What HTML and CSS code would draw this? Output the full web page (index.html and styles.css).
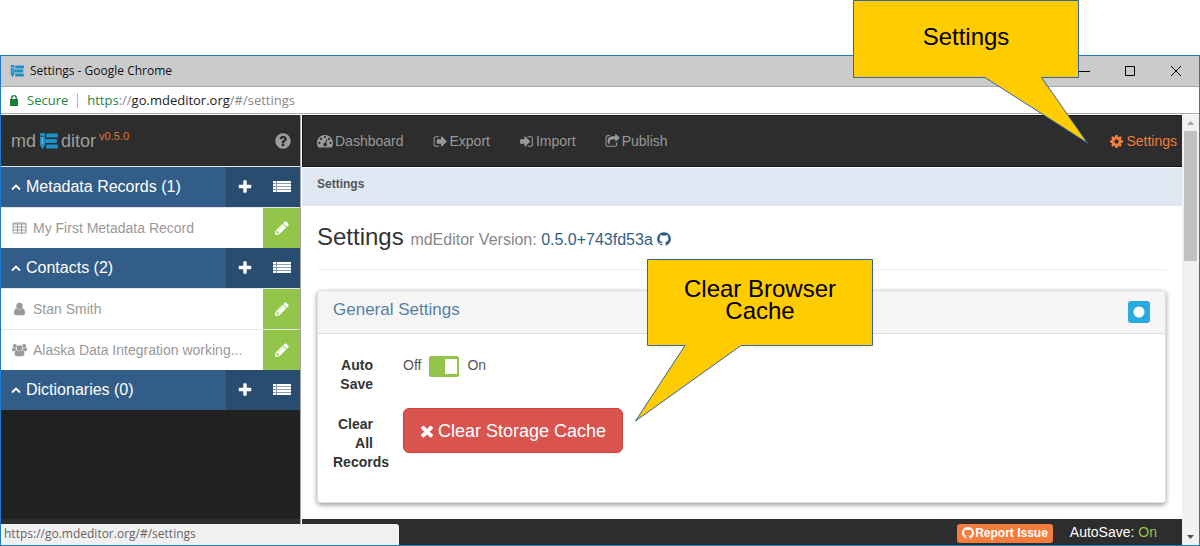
FILE: index.html
```html
<!DOCTYPE html>
<html lang="en">
<head>
<meta charset="utf-8">
<title>Settings</title>
<link rel="stylesheet" href="styles.css">
</head>
<body>
<svg class="defs" width="0" height="0" aria-hidden="true">
  <symbol id="logo" viewBox="0 0 19 18"><rect x="1" y="1" width="5" height="3" rx="1"/><path d="M1 4.500h5V13l-2.500 4.500L1 13z"/><rect x="7" y="1.500" width="12" height="4" rx="1"/><rect x="6" y="7" width="12" height="4" rx="1"/><rect x="7" y="12.500" width="12" height="4" rx="1"/><path d="M3.500 5v7" stroke="#fff" stroke-opacity=".35"/></symbol>
  <symbol id="help" viewBox="0 0 1792 1792"><path d="M1024 1376v-192q0-14-9-23t-23-9h-192q-14 0-23 9t-9 23v192q0 14 9 23t23 9h192q14 0 23-9t9-23zm256-672q0-88-55.500-163t-138.500-116-170-41q-243 0-371 213-15 24 8 42l132 100q7 6 19 6 16 0 25-12 53-68 86-92 34-24 86-24 48 0 85.500 26t37.500 59q0 38-20 61t-68 45q-63 28-115.500 86.500t-52.500 125.500v36q0 14 9 23t23 9h192q14 0 23-9t9-23q0-19 21.500-49.500t54.500-49.500q32-18 49-28.500t46-35 44.500-48 28-60.500 12.500-81zm384 192q0 209-103 385.500t-279.500 279.500-385.500 103-385.500-103-279.500-279.500-103-385.500 103-385.500 279.500-279.500 385.500-103 385.500 103 279.500 279.500 103 385.500z"/></symbol>
  <symbol id="plus" viewBox="0 0 1792 1792"><path d="M1600 736v192q0 40-28 68t-68 28h-416v416q0 40-28 68t-68 28h-192q-40 0-68-28t-28-68v-416h-416q-40 0-68-28t-28-68v-192q0-40 28-68t68-28h416v-416q0-40 28-68t68-28h192q40 0 68 28t28 68v416h416q40 0 68 28t28 68z"/></symbol>
  <symbol id="list" viewBox="0 0 18 14"><path d="M0 1h3v2H0zM4 1h14v2H4zM0 4h3v2H0zM4 4h14v2H4zM0 7h3v2H0zM4 7h14v2H4zM0 10h3v2H0zM4 10h14v2H4z"/><path opacity=".45" d="M0 1h18v11H0z"/></symbol>
  <symbol id="pencil" viewBox="0 0 1792 1792"><path d="M491 1536l91-91-235-235-91 91v107h128v128h107zm523-928q0-22-22-22-10 0-17 7l-542 542q-7 7-7 17 0 22 22 22 10 0 17-7l542-542q7-7 7-17zm-54-192l416 416-832 832h-416v-416zm683 96q0 53-37 90l-166 166-416-416 166-165q36-38 90-38 53 0 91 38l235 234q37 39 37 91z"/></symbol>
  <symbol id="out" viewBox="0 0 1792 1792"><path d="M704 1440q0 4 1 20t.5 26.500-3 23.500-10 19.500-20.500 6.500h-320q-119 0-203.500-84.500t-84.500-203.500v-704q0-119 84.500-203.500t203.500-84.500h320q13 0 22.500 9.500t9.500 22.500q0 4 1 20t.5 26.500-3 23.500-10 19.500-20.500 6.500h-320q-66 0-113 47t-47 113v704q0 66 47 113t113 47h312l11.500 1 11.500 3 8 5.500 7 9 2 13.500zm928-544q0 26-19 45l-544 544q-19 19-45 19t-45-19-19-45v-288h-448q-26 0-45-19t-19-45v-384q0-26 19-45t45-19h448v-288q0-26 19-45t45-19 45 19l544 544q19 19 19 45z"/></symbol>
  <symbol id="in" viewBox="0 0 1792 1792"><path d="M1312 896q0 26-19 45l-544 544q-19 19-45 19t-45-19-19-45v-288h-448q-26 0-45-19t-19-45v-384q0-26 19-45t45-19h448v-288q0-26 19-45t45-19 45 19l544 544q19 19 19 45zm352-352v704q0 119-84.500 203.500t-203.500 84.500h-320q-13 0-22.500-9.500t-9.500-22.500q0-4-1-20t-.5-26.500 3-23.500 10-19.500 20.500-6.500h320q66 0 113-47t47-113v-704q0-66-47-113t-113-47h-312l-11.500-1-11.500-3-8-5.500-7-9-2-13.500q0-4-1-20t-.5-26.500 3-23.500 10-19.500 20.500-6.500h320q119 0 203.500 84.500t84.500 203.500z"/></symbol>
  <symbol id="share" viewBox="0 0 1792 1792"><path d="M1472 989v259q0 119-84.500 203.500t-203.500 84.500h-832q-119 0-203.500-84.500t-84.500-203.500v-832q0-119 84.500-203.500t203.500-84.500h255q13 0 22.500 9.500t9.500 22.500q0 27-26 32-77 26-133 60-10 4-16 4h-112q-66 0-113 47t-47 113v832q0 66 47 113t113 47h832q66 0 113-47t47-113v-214q0-19 18-29 28-13 54-37 16-16 35-8 21 9 21 29zm237-496l-384 384q-18 19-45 19-12 0-25-5-39-17-39-59v-192h-160q-323 0-438 131-119 137-74 473 3 23-20 34-8 2-12 2-16 0-26-13-10-14-21-31t-39.500-68.500-49.500-99.500-38.500-114-17.500-122q0-49 3.500-91t14-90 28-88 47-81.500 68.500-74 94.500-61.500 124.500-48.500 159.500-30.500 196.500-11h160v-192q0-42 39-59 13-5 25-5 26 0 45 19l384 384q19 19 19 45t-19 45z"/></symbol>
  <symbol id="cog" viewBox="0 0 1792 1792"><path d="M1152 896q0-106-75-181t-181-75-181 75-75 181 75 181 181 75 181-75 75-181zm512-109v222q0 12-8 23t-20 13l-185 28q-19 54-39 91 35 50 107 138 10 12 10 25t-9 23q-27 37-99 108t-94 71q-12 0-26-9l-138-108q-44 23-91 38-16 136-29 186-7 28-36 28h-222q-14 0-24.500-8.500t-11.500-21.500l-28-184q-49-16-90-37l-141 107q-10 9-25 9-14 0-25-11-126-114-165-168-7-10-7-23 0-12 8-23 15-21 51-66.500t54-70.500q-27-50-41-99l-183-27q-13-2-21-12.500t-8-23.500v-222q0-12 8-23t19-13l186-28q14-46 39-92-40-57-107-138-10-12-10-24 0-10 9-23 26-36 98.500-107.500t94.500-71.500q13 0 26 10l138 107q44-23 91-38 16-136 29-186 7-28 36-28h222q14 0 24.500 8.500t11.500 21.500l28 184q49 16 90 37l142-107q9-9 24-9 13 0 25 10 129 119 165 170 7 8 7 22 0 12-8 23-15 21-51 66.500t-54 70.500q26 50 41 98l183 28q13 2 21 12.500t8 23.500z"/></symbol>
  <symbol id="times" viewBox="0 0 1792 1792"><path d="M1490 1322q0 40-28 68l-136 136q-28 28-68 28t-68-28l-294-294-294 294q-28 28-68 28t-68-28l-136-136q-28-28-28-68t28-68l294-294-294-294q-28-28-28-68t28-68l136-136q28-28 68-28t68 28l294 294 294-294q28-28 68-28t68 28l136 136q28 28 28 68t-28 68l-294 294 294 294q28 28 28 68z"/></symbol>
  <symbol id="github" viewBox="0 0 1792 1792"><path d="M896 128q209 0 385.500 103t279.500 279.500 103 385.500q0 251-146.500 451.500t-378.500 277.500q-27 5-40-7t-13-30q0-3 .5-76.500t.5-134.500q0-97-52-142 57-6 102.500-18t94-39 81-66.500 53-105 20.500-150.500q0-119-79-206 37-91-8-204-28-9-81 11t-92 44l-38 24q-93-26-192-26t-192 26q-16-11-42.500-27t-83.500-38.500-85-13.500q-45 113-8 204-79 87-79 206 0 85 20.500 150t52.500 105 80.500 67 94 39 102.500 18q-39 36-49 103-21 10-45 15t-57 5-65.500-21.500-55.500-62.500q-19-32-48.500-52t-49.500-24l-20-3q-21 0-29 4.500t-5 11.500 9 14 13 12l7 5q22 10 43.500 38t31.500 51l10 23q13 38 44 61.500t67 30 69.500 7 55.500-3.500l23-4q0 38 .5 88.500t.5 54.500q0 18-13 30t-40 7q-232-77-378.500-277.500t-146.500-451.500q0-209 103-385.500t279.500-279.500 385.500-103z"/></symbol>
  <symbol id="dash" viewBox="0 0 16 14"><path fill-rule="evenodd" d="M8 1a8 8 0 0 0-6.800 12.200q.3.300.7.300h12.200q.4 0 .7-.3A8 8 0 0 0 8 1zM8 2a1.100 1.100 0 1 1 0 2.200A1.100 1.100 0 0 1 8 2zM4 3.800A1.100 1.100 0 1 1 4 6a1.100 1.100 0 0 1 0-2.200zm8 0A1.100 1.100 0 1 1 12 6a1.100 1.100 0 0 1 0-2.200zM2.400 7.800a1.100 1.100 0 1 1 0 2.200 1.100 1.100 0 0 1 0-2.200zm11.200 0a1.100 1.100 0 1 1 0 2.200 1.100 1.100 0 0 1 0-2.200zM9.500 5.100l.9.300-1.200 3.700a1.800 1.800 0 1 1-1-.3z"/></symbol>
  <symbol id="table" viewBox="0 0 15 13"><path fill="none" stroke="currentColor" d="M1.500 1.500h12q.500 0 .500.500v9q0 .500-.500.500h-12q-.500 0-.500-.500V2q0-.500.500-.500zM1 2.500h13M1 5.500h13M1 8.500h13M5.500 2v10M9.500 2v10"/></symbol>
  <symbol id="user" viewBox="0 0 14 14"><circle cx="7" cy="4" r="3.200"/><path d="M4 6.200C2 6.600 1.500 8.500 1.500 11q0 2.200 2 2.200h7q2 0 2-2.200c0-2.500-.5-4.400-2.500-4.800a4 4 0 0 1-6 0z"/></symbol>
  <symbol id="users" viewBox="0 0 16 14"><circle cx="8" cy="4.800" r="3"/><circle cx="3" cy="2.600" r="2.100"/><circle cx="13" cy="2.600" r="2.100"/><path d="M5 7c-2 .4-2.200 2.400-2.200 4 0 1.800.8 2.600 2.200 2.600h6c1.400 0 2.200-.8 2.200-2.600 0-1.600-.2-3.600-2.200-4a4 4 0 0 1-6 0zM1.200 4.200C0 4.500 0 6 0 7q0 1.200 1.500 1.200h1.300q.7-1.200 1.700-1.700L4.300 4.800a3 3 0 0 1-3.100-.6zm13.600 0C16 4.500 16 6 16 7q0 1.200-1.500 1.200h-1.300q-.7-1.200-1.700-1.700l.2-1.700a3 3 0 0 0 3.100-.6z"/></symbol>
  <symbol id="chevron" viewBox="0 0 10 8"><path fill="none" stroke="currentColor" stroke-width="1.800" d="M1 6.500l4-4 4 4"/></symbol>
</svg>

<div class="window">
  <header class="titlebar">
    <svg class="favicon"><use href="#logo"/></svg>
    <span>Settings - Google Chrome</span>
    <div class="window-buttons">
      <button type="button" aria-label="Minimize"><svg viewBox="0 0 12 12"><path d="M0 6.500h12"/></svg></button>
      <button type="button" aria-label="Maximize"><svg viewBox="0 0 12 12"><path d="M1.500 1.500h9v9h-9z"/></svg></button>
      <button type="button" aria-label="Close"><svg viewBox="0 0 12 12"><path d="M1 1l10 10M11 1L1 11"/></svg></button>
    </div>
  </header>
  <div class="addressbar">
    <svg class="lock" viewBox="0 0 8 11"><path d="M0 4h8v7H0z"/><path d="M1.700 5V3a2.300 2.300 0 0 1 4.600 0v2" fill="none" stroke="currentColor" stroke-width="1.300"/></svg>
    <span class="secure">Secure</span>
    <span class="url"><span class="secure">https</span>://<b>go.mdeditor.org</b>/#/settings</span>
  </div>

  <div class="app">
    <aside class="sidebar">
      <div class="brand">
        <span>md</span><svg class="brand-logo"><use href="#logo"/></svg><span>ditor</span><sup>v0.5.0</sup>
        <button type="button" class="help" aria-label="Help"><svg class="icon18"><use href="#help"/></svg></button>
      </div>
      <nav class="records">
        <div class="group"><a href="#md" class="group-name"><svg class="chev"><use href="#chevron"/></svg>Metadata Records (1)</a><div class="group-tools"><button type="button" aria-label="Add record"><svg class="icon16"><use href="#plus"/></svg></button><button type="button" aria-label="List records"><svg class="list"><use href="#list"/></svg></button></div></div>
        <div class="item"><a href="#r1"><svg class="item-icon"><use href="#table"/></svg><span>My First Metadata Record</span></a><button type="button" aria-label="Edit record"><svg class="icon16"><use href="#pencil"/></svg></button></div>
        <div class="group"><a href="#contacts" class="group-name"><svg class="chev"><use href="#chevron"/></svg>Contacts (2)</a><div class="group-tools"><button type="button" aria-label="Add contact"><svg class="icon16"><use href="#plus"/></svg></button><button type="button" aria-label="List contacts"><svg class="list"><use href="#list"/></svg></button></div></div>
        <div class="item"><a href="#c1"><svg class="item-icon"><use href="#user"/></svg><span>Stan Smith</span></a><button type="button" aria-label="Edit Stan Smith"><svg class="icon16"><use href="#pencil"/></svg></button></div>
        <div class="item"><a href="#c2"><svg class="item-icon"><use href="#users"/></svg><span>Alaska Data Integration working...</span></a><button type="button" aria-label="Edit working group"><svg class="icon16"><use href="#pencil"/></svg></button></div>
        <div class="group"><a href="#dict" class="group-name"><svg class="chev"><use href="#chevron"/></svg>Dictionaries (0)</a><div class="group-tools"><button type="button" aria-label="Add dictionary"><svg class="icon16"><use href="#plus"/></svg></button><button type="button" aria-label="List dictionaries"><svg class="list"><use href="#list"/></svg></button></div></div>
      </nav>
      <div class="sidebar-foot"></div>
    </aside>

    <main class="main">
      <nav class="navbar">
        <a href="#dashboard"><svg class="dash"><use href="#dash"/></svg>Dashboard</a>
        <a href="#export"><svg class="icon15"><use href="#out"/></svg>Export</a>
        <a href="#import"><svg class="icon15"><use href="#in"/></svg>Import</a>
        <a href="#publish"><svg class="icon15"><use href="#share"/></svg>Publish</a>
        <a href="#settings" class="active"><svg class="icon15"><use href="#cog"/></svg>Settings</a>
      </nav>
      <div class="breadcrumb">Settings</div>
      <div class="content">
        <h1>Settings <small>mdEditor Version: <a href="#version">0.5.0+743fd53a<svg class="icon16"><use href="#github"/></svg></a></small></h1>
        <section class="panel">
          <header class="panel-head">
            <h2>General Settings</h2>
            <button type="button" aria-label="Toggle panel"><svg viewBox="0 0 22 22"><circle cx="11" cy="11" r="5.500"/></svg></button>
          </header>
          <div class="panel-body">
            <label class="field-name" for="autosave">Auto<br>Save</label>
            <div class="switch"><span>Off</span><input type="checkbox" id="autosave" role="switch" checked><span>On</span></div>
            <div class="field-name clear-label">Clear<br>All<br><span>Records</span></div>
            <div class="field"><button type="button" class="danger"><svg class="icon18"><use href="#times"/></svg>Clear Storage Cache</button></div>
          </div>
        </section>
      </div>
      <footer class="footer">
        <button type="button" class="report"><svg class="icon14"><use href="#github"/></svg>Report Issue</button>
        <span>AutoSave: <span class="on">On</span></span>
      </footer>
    </main>

    <div class="scrollbar">
      <svg viewBox="0 0 17 16"><path fill="#a3a3a3" d="M5 10l3.500-4L12 10z"/></svg>
      <div class="thumb"></div>
      <svg viewBox="0 0 17 16"><path fill="#505050" d="M5 6l3.500 4L12 6z"/></svg>
    </div>
  </div>
  <div class="status">https://go.mdeditor.org/#/settings</div>
</div>

<div class="callout callout-settings">
  <svg viewBox="0 0 236 144"><path d="M.5.500h225v77h-37L234.500 143 132 77.500H.5z"/></svg>
  <p>Settings</p>
</div>
<div class="callout callout-cache">
  <svg viewBox="0 0 239 164"><path d="M12.500.500h225v86H106L.5 162 50 86.500H12.500z"/></svg>
  <p>Clear Browser<br>Cache</p>
</div>
</body>
</html>
```

FILE: styles.css
```css
* { box-sizing: border-box; }
body {
  margin: 0;
  min-height: 100vh;
  padding-top: 55px;
  position: relative;
  display: flex;
  flex-direction: column;
  background: #fff;
  font: 14px/20px "Liberation Sans", Arial, sans-serif;
  color: #333;
}
a { text-decoration: none; color: inherit; }
button { font: inherit; color: inherit; border: 0; padding: 0; margin: 0; background: none; cursor: pointer; }
svg { display: block; flex: none; fill: currentColor; }
.defs { position: absolute; }
.icon14 { width: 14px; height: 14px; }
.icon15 { width: 15px; height: 15px; }
.icon16 { width: 16px; height: 16px; }
.icon18 { width: 18px; height: 18px; }

.window { position: relative; flex: 1; display: flex; flex-direction: column; border: 1px solid #1a7cd0; }
.titlebar {
  display: flex; align-items: center; height: 31px; padding-left: 9px;
  background: #cbcbcb; border-bottom: 1px solid #aaa;
  font: 12px/16px "Open Sans", sans-serif; color: #111;
}
.favicon { width: 14px; height: 14px; margin-right: 6px; color: #1e8fc6; }
.window-buttons { margin-left: auto; display: flex; }
.window-buttons button { width: 46px; height: 30px; display: grid; place-items: center; }
.window-buttons svg { width: 12px; height: 12px; fill: none; stroke: #000; }
.addressbar {
  display: flex; align-items: center; height: 27px; padding-left: 9px;
  border-bottom: 1px solid #aaa; font: 13px/18px "Open Sans", sans-serif; color: #888;
}
.lock { width: 8px; height: 11px; margin-right: 9px; color: #188038; }
.addressbar .secure { color: #238642; }
.url { margin-left: 9px; padding-left: 9px; border-left: 1px solid #bbb; line-height: 15px; }
.url b { font-weight: 400; color: #222; }

.app { flex: 1; display: flex; padding-top: 1px; }
.sidebar { width: 300px; flex: none; display: flex; flex-direction: column; background: #222; border-right: 1px solid #a5a5a5; }
.brand {
  display: flex; align-items: center; height: 52px; padding: 0 8px 0 10px;
  background: #2d2d2d; border-bottom: 1px solid #e5e5e5; color: #9d9d9d; font-size: 18px;
}
.brand-logo { width: 19px; height: 18px; margin: 0 3px; color: #1e8fc6; }
.brand sup { align-self: flex-start; margin: 11px 0 0 3px; font-size: 11px; line-height: 20px; color: #e8703a; }
.help { margin-left: auto; }
.group { display: flex; height: 40px; background: #325d88; color: #fff; }
.group-name { flex: 1; display: flex; align-items: center; padding-left: 10px; font-size: 16px; }
.chev { width: 10px; height: 8px; margin-right: 5px; }
.group-tools { display: flex; background: #294d70; }
.group-tools button { width: 37px; display: grid; place-items: center; }
.list { width: 18px; height: 14px; }
.item { display: flex; height: 41px; background: #fff; border-top: 1px solid #e5e5e5; color: #999; }
.item a { flex: 1; min-width: 0; display: flex; align-items: center; padding-left: 11px; white-space: nowrap; }
.item-icon { width: 15px; height: 14px; margin-right: 6px; }
.item button { width: 37px; display: grid; place-items: center; background: #93c54b; color: #fff; }
.sidebar-foot { height: 26px; margin-top: auto; background: #2d2d2d; }

.main { flex: 1; min-width: 0; display: flex; flex-direction: column; padding-left: 1px; }
.navbar {
  display: flex; align-items: center; gap: 29px; height: 52px; padding: 0 5px 0 14px;
  background: #2d2d2d; color: #999; border: 1px solid #161616; border-width: 1px 0 1px 1px;
}
.navbar a { display: flex; align-items: center; gap: 2px; }
.navbar .active { margin-left: auto; color: #f47c3c; }
.dash { width: 16px; height: 14px; }
.breadcrumb { height: 39px; padding: 7px 15px; background: #dfe8f2; border-top: 1px solid #fff; font-size: 12px; font-weight: 700; line-height: 18px; color: #555; }
.content { padding: 14px 16px 16px 15px; }
h1 { margin: 0 0 20px; padding: 0 0 12px; border-bottom: 1px solid #eee; font-size: 24px; font-weight: 400; line-height: 34px; }
h1 small { font-size: 16px; color: #888; }
h1 a { color: #325d88; }
h1 svg { display: inline-block; margin-left: 3px; vertical-align: -2px; }
.panel { border: 1px solid #ddd; border-radius: 4px; box-shadow: 0 2px 5px rgba(0,0,0,.4); }
.panel-head { display: flex; align-items: center; justify-content: space-between; height: 43px; padding: 0 15px; background: #f5f5f5; border-bottom: 1px solid #ddd; border-radius: 4px 4px 0 0; }
.panel-head h2 { margin: 0 0 4px; font-size: 17px; font-weight: 400; color: #5580a5; }
.panel-head button { width: 22px; height: 22px; border-radius: 3px; background: #29abe0; color: #fff; }
.panel-body { display: grid; grid-template-columns: 55px 1fr; column-gap: 15px; row-gap: 14px; padding: 22px 15px 30px; }
.field-name { padding-right: 15px; text-align: right; font-weight: 700; line-height: 19px; }
.clear-label { padding-top: 7px; }
.clear-label span { margin-right: -15px; }
.switch { display: flex; align-items: flex-start; gap: 8px; line-height: 19px; color: #555; }
.switch input { appearance: none; width: 30px; height: 21px; margin: 0; border: 1px solid #93c54b; border-radius: 2px; background: linear-gradient(#fff, #fff) 15px 2px / 12px 15px no-repeat #93c54b; }
.danger { display: flex; align-items: center; gap: 2px; height: 45px; padding: 0 16px 0 14px; border: 1px solid #d43f3a; border-radius: 6px; background: #d9534f; color: #fff; font-size: 18px; }
.footer { display: flex; align-items: center; justify-content: flex-end; height: 26px; margin-top: auto; padding: 0 25px 0 0; gap: 17px; background: #2d2d2d; color: #fff; }
.report { display: flex; align-items: center; height: 19px; margin-top: 2px; padding: 0 5px 0 4px; border-radius: 3px; background: #f47c3c; font-size: 12px; font-weight: 700; }
.on { color: #93c54b; }

.scrollbar { width: 17px; flex: none; display: flex; flex-direction: column; background: #f1f1f1; }
.scrollbar svg { width: 17px; height: 16px; }
.thumb { height: 130px; margin: 0 2px auto; background: #c1c1c1; }
.status { position: absolute; left: 0; bottom: 0; width: 398px; height: 21px; padding: 0 3px; background: #f1f1f1; border-radius: 0 3px 0 0; font: 12px/20px "Open Sans", sans-serif; color: #666; }

.callout { position: absolute; font-size: 24px; line-height: 22px; text-align: center; color: #000; }
.callout svg { width: 100%; height: 100%; fill: #fc0; stroke: #3465a4; }
.callout p { position: absolute; top: 0; width: 226px; margin: 0; }
.callout-settings { top: 0; right: 111px; width: 236px; height: 144px; }
.callout-settings p { left: 0; padding-top: 26px; }
.callout-cache { top: 259px; left: 635px; width: 239px; height: 164px; }
.callout-cache p { left: 12px; padding-top: 19px; }
```
